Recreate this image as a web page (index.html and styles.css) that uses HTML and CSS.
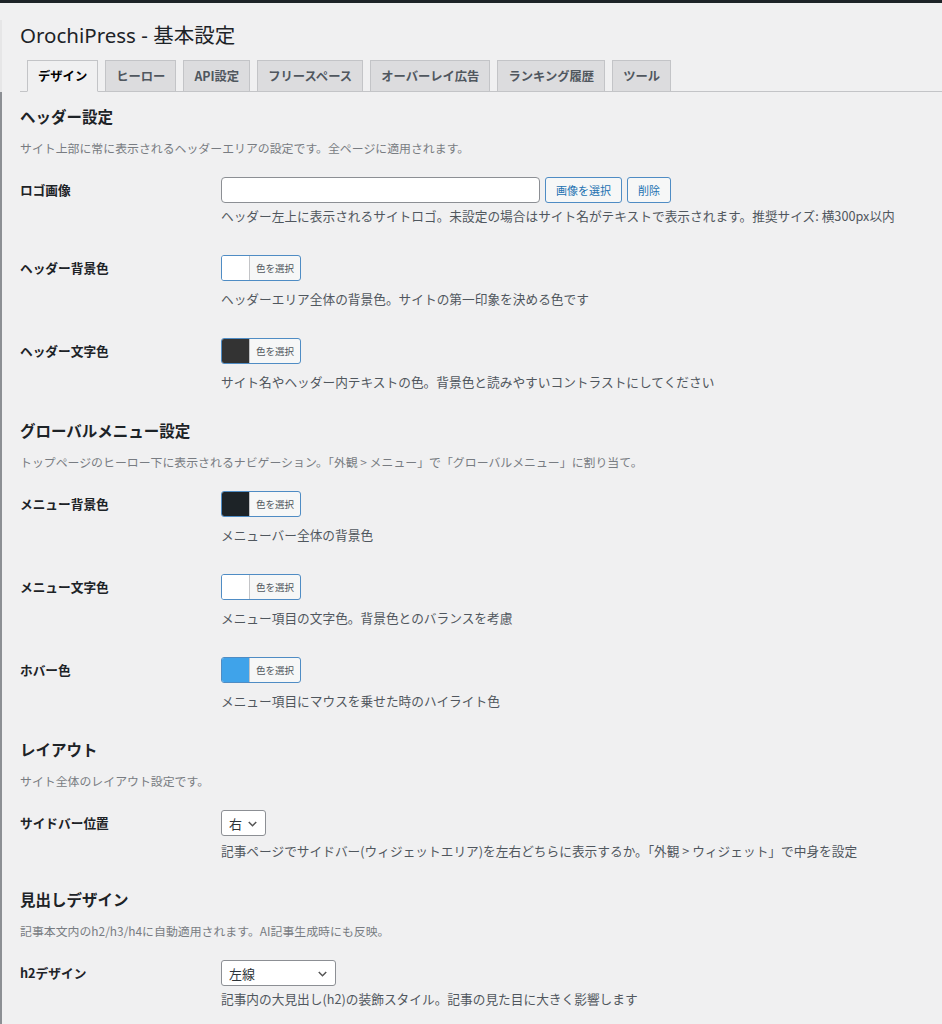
FILE: index.html
```html
<!DOCTYPE html>
<html lang="ja">
<head>
  <meta charset="UTF-8">
  <meta name="viewport" content="width=device-width, initial-scale=1.0">
  <title>OrochiPress - 基本設定</title>
  <link rel="stylesheet" href="styles.css">
</head>
<body>
  <div class="adminbar"></div>

  <div class="head">
    <h1 class="page-title">OrochiPress - 基本設定</h1>
    <nav class="tabs">
      <a class="tab active" href="#">デザイン</a>
      <a class="tab" href="#">ヒーロー</a>
      <a class="tab" href="#">API設定</a>
      <a class="tab" href="#">フリースペース</a>
      <a class="tab" href="#">オーバーレイ広告</a>
      <a class="tab" href="#">ランキング履歴</a>
      <a class="tab" href="#">ツール</a>
    </nav>
  </div>

  <div class="panel">
    <h2 class="section-title">ヘッダー設定</h2>
    <p class="section-desc">サイト上部に常に表示されるヘッダーエリアの設定です。全ページに適用されます。</p>
    <div class="form-table">
      <div class="row">
        <div class="label">ロゴ画像</div>
        <div class="field">
          <div class="media">
            <input type="text" class="text-input">
            <button class="btn">画像を選択</button>
            <button class="btn">削除</button>
          </div>
          <p class="desc">ヘッダー左上に表示されるサイトロゴ。未設定の場合はサイト名がテキストで表示されます。推奨サイズ: 横300px以内</p>
        </div>
      </div>
      <div class="row">
        <div class="label">ヘッダー背景色</div>
        <div class="field">
          <button class="color-btn"><span class="swatch" style="background:#ffffff"></span><span class="color-text">色を選択</span></button>
          <p class="desc picker-desc">ヘッダーエリア全体の背景色。サイトの第一印象を決める色です</p>
        </div>
      </div>
      <div class="row">
        <div class="label">ヘッダー文字色</div>
        <div class="field">
          <button class="color-btn"><span class="swatch" style="background:#333333"></span><span class="color-text">色を選択</span></button>
          <p class="desc picker-desc">サイト名やヘッダー内テキストの色。背景色と読みやすいコントラストにしてください</p>
        </div>
      </div>
    </div>

    <h2 class="section-title">グローバルメニュー設定</h2>
    <p class="section-desc">トップページのヒーロー下に表示されるナビゲーション。「外観 &gt; メニュー」で「グローバルメニュー」に割り当て。</p>
    <div class="form-table">
      <div class="row">
        <div class="label">メニュー背景色</div>
        <div class="field">
          <button class="color-btn"><span class="swatch" style="background:#1d2327"></span><span class="color-text">色を選択</span></button>
          <p class="desc picker-desc">メニューバー全体の背景色</p>
        </div>
      </div>
      <div class="row">
        <div class="label">メニュー文字色</div>
        <div class="field">
          <button class="color-btn"><span class="swatch" style="background:#ffffff"></span><span class="color-text">色を選択</span></button>
          <p class="desc picker-desc">メニュー項目の文字色。背景色とのバランスを考慮</p>
        </div>
      </div>
      <div class="row">
        <div class="label">ホバー色</div>
        <div class="field">
          <button class="color-btn"><span class="swatch" style="background:#3fa3ea"></span><span class="color-text">色を選択</span></button>
          <p class="desc picker-desc">メニュー項目にマウスを乗せた時のハイライト色</p>
        </div>
      </div>
    </div>

    <h2 class="section-title">レイアウト</h2>
    <p class="section-desc">サイト全体のレイアウト設定です。</p>
    <div class="form-table">
      <div class="row">
        <div class="label">サイドバー位置</div>
        <div class="field">
          <select class="select">
            <option>右</option>
            <option>左</option>
          </select>
          <p class="desc select-desc">記事ページでサイドバー(ウィジェットエリア)を左右どちらに表示するか。「外観 &gt; ウィジェット」で中身を設定</p>
        </div>
      </div>
    </div>

    <h2 class="section-title">見出しデザイン</h2>
    <p class="section-desc">記事本文内のh2/h3/h4に自動適用されます。AI記事生成時にも反映。</p>
    <div class="form-table">
      <div class="row">
        <div class="label">h2デザイン</div>
        <div class="field">
          <select class="select wide">
            <option>左線</option>
            <option>下線</option>
            <option>背景</option>
          </select>
          <p class="desc">記事内の大見出し(h2)の装飾スタイル。記事の見た目に大きく影響します</p>
        </div>
      </div>
    </div>
  </div>
</body>
</html>
```

FILE: styles.css
```css
body {
  margin: 0;
  background-color: #f0f0f1;
  color: #1d2327;
  font-family: "Noto Sans", "Noto Sans CJK JP", sans-serif;
  font-size: 13px;
}
.adminbar {
  height: 3px;
  background-color: #1d2327;
}
.head {
  padding-left: 18px;
  border-left: 2px solid #e6e6e7;
}
.page-title {
  font-size: 20.5px;
  font-weight: 400;
  line-height: 30px;
  margin: 17px 0 0;
  color: #1d2327;
}
.tabs {
  display: flex;
  margin-top: 10px;
  border-bottom: 1px solid #c3c4c7;
}
.tab {
  margin-left: 7px;
  margin-bottom: -1px;
  padding: 5px 10px;
  font-family: "Noto Sans CJK JP", sans-serif;
  font-size: 12.3px;
  line-height: 20px;
  font-weight: 700;
  color: #50575e;
  background-color: #dcdcde;
  border: 1px solid #c3c4c7;
  text-decoration: none;
}
.tab.active {
  background-color: #f0f0f1;
  border-bottom-color: #f0f0f1;
  color: #000;
}

.panel {
  border-left: 2px solid #8c8f94;
  padding-left: 18px;
  padding-bottom: 40px;
}
.section-title {
  font-family: "Noto Sans CJK JP", sans-serif;
  font-size: 15.5px;
  font-weight: 700;
  line-height: 22px;
  margin: 0;
  padding-top: 13px;
}
.section-desc {
  font-family: "Noto Sans CJK JP", sans-serif;
  font-size: 11.9px;
  line-height: 18px;
  color: #787c82;
  margin: 12px 0 5px;
}
.row {
  display: grid;
  grid-template-columns: 201px 1fr;
}
.label {
  font-family: "Noto Sans CJK JP", sans-serif;
  font-weight: 700;
  font-size: 12.7px;
  line-height: 20px;
  padding-top: 18px;
}
.field {
  padding: 15px 0;
}
.desc {
  font-family: "Noto Sans CJK JP", sans-serif;
  font-size: 12.7px;
  line-height: 18px;
  color: #50575e;
  margin: 4px 0 0;
}
.picker-desc {
  margin-top: 9px;
}
.select-desc {
  margin-top: 6px;
}

.media {
  display: flex;
  gap: 5px;
}
.text-input {
  box-sizing: border-box;
  width: 319px;
  height: 26px;
  border: 1px solid #8c8f94;
  border-radius: 4px;
  background-color: #fff;
  margin: 0;
}
.btn {
  height: 26px;
  padding: 0 10px;
  font-family: "Noto Sans CJK JP", sans-serif;
  font-size: 11px;
  color: #2271b1;
  background-color: #f6f7f7;
  border: 1px solid #4f8cc4;
  border-radius: 3px;
  cursor: pointer;
}

.color-btn {
  display: flex;
  width: 80px;
  height: 26px;
  padding: 0;
  border: 1px solid #4f8cc4;
  border-radius: 3px;
  background-color: #f6f7f7;
  overflow: hidden;
  cursor: pointer;
}
.swatch {
  width: 27px;
  height: 100%;
}
.color-text {
  flex: 1;
  border-left: 1px solid #c3c4c7;
  font-family: "Noto Sans CJK JP", sans-serif;
  font-size: 9.5px;
  line-height: 24px;
  color: #50575e;
  text-align: center;
}

.select {
  appearance: none;
  -webkit-appearance: none;
  display: block;
  height: 26px;
  padding: 0 22px 0 7px;
  font-family: "Noto Sans CJK JP", sans-serif;
  font-size: 13px;
  color: #2c3338;
  background: #fff url("data:image/svg+xml,%3Csvg xmlns='http://www.w3.org/2000/svg' viewBox='0 0 20 20'%3E%3Cpath d='M5 8l5 5 5-5' fill='none' stroke='%23555' stroke-width='2'/%3E%3C/svg%3E") no-repeat right 5px top 55%;
  background-size: 15px;
  border: 1px solid #8c8f94;
  border-radius: 3px;
}
.select.wide {
  width: 115px;
}
```
